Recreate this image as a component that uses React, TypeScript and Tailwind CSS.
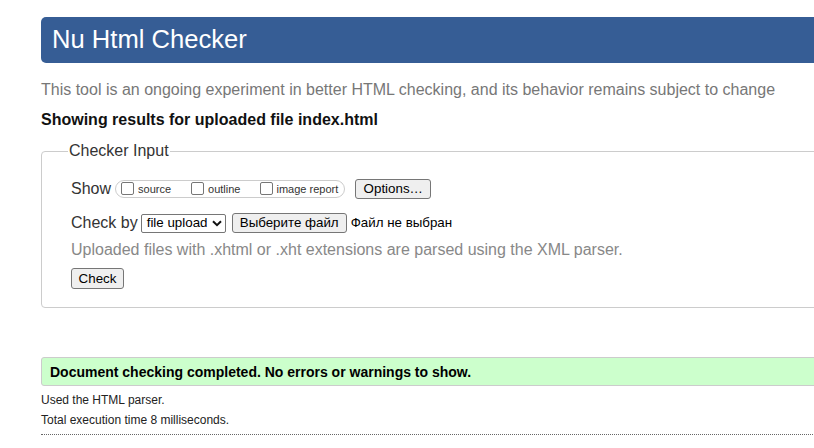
import React from "react";

const font = { fontFamily: '"Liberation Sans", Arial, sans-serif' };

const Box = () => (
	<span className="inline-block w-[13px] h-[13px] border border-[#767676] rounded-[2px] bg-white shrink-0 mt-[1px]" />
);

const App = () => {
	return (
		<div className="w-[814px] h-[448px] overflow-hidden bg-white text-[#222]" style={font}>
			<div className="w-[900px] ml-[41px] pt-[17px]">
				{/* header */}
				<h1 className="h-[46px] bg-[#365d95] rounded-[5px] flex items-center pl-[11px] pb-[2px] text-white text-[25.6px] leading-[30px]">
					Nu Html Checker
				</h1>

				<p className="mt-[18px] text-[16px] leading-[18px] text-[#777]">
					This tool is an ongoing experiment in better HTML checking, and its behavior remains subject to change
				</p>
				<p className="mt-[12px] text-[16px] leading-[18px] font-bold text-[#111]">
					Showing results for uploaded file index.html
				</p>

				{/* checker input */}
				<fieldset className="mt-[13px] border border-[#ccc] rounded-[4px] pl-[26px] pb-[18px]">
					<legend className="pl-[1px] pr-[1px] text-[16px] leading-[18px] text-[#333]">Checker Input</legend>
					<div className="pl-[3px]">
						<div className="mt-[18px] h-[22px] flex items-center">
							<span className="text-[16px] leading-[18px] text-[#333]">Show</span>
							<div className="ml-[4px] h-[18px] border border-[#ccc] rounded-full flex items-start pl-[5px] pr-[6px]">
								<Box />
								<span className="ml-[4px] mt-[2px] text-[11px] leading-[13px] text-[#333]">source</span>
								<span className="ml-[20px] flex items-start">
									<Box />
									<span className="ml-[4px] mt-[2px] text-[11px] leading-[13px] text-[#333]">outline</span>
								</span>
								<span className="ml-[20px] flex items-start">
									<Box />
									<span className="ml-[3px] mt-[2px] text-[11px] leading-[13px] text-[#333]">image report</span>
								</span>
							</div>
							<button className="ml-[10px] h-[20px] w-[76px] bg-[#efefef] border border-[#767676] rounded-[3px] text-[13.33px] leading-[16px] text-black">
								Options…
							</button>
						</div>

						<div className="mt-[12px] h-[22px] flex items-center">
							<span className="text-[16px] leading-[18px] text-[#333]">Check by</span>
							<div className="ml-[3px] h-[19px] w-[85px] border border-[#767676] rounded-[2px] bg-white flex items-center justify-between pl-[5px] pr-[3px] text-[13.33px] leading-[16px] text-black">
								<span>file upload</span>
								<svg width="10" height="7" viewBox="0 0 10 7" className="mt-[1px]">
									<path d="M1 1.2 L5 5.2 L9 1.2" fill="none" stroke="#111" strokeWidth="2" />
								</svg>
							</div>
							<button className="ml-[6px] h-[20px] w-[115px] bg-[#efefef] border border-[#767676] rounded-[3px] text-[13.33px] leading-[16px] text-black">
								Выберите файл
							</button>
							<span className="ml-[4px] text-[13.33px] leading-[16px] text-black">Файл не выбран</span>
						</div>

						<p className="mt-[7px] text-[16px] leading-[18px] text-[#888]">
							Uploaded files with .xhtml or .xht extensions are parsed using the XML parser.
						</p>

						<button className="mt-[9px] h-[21px] w-[53px] bg-[#efefef] border border-[#767676] rounded-[3px] text-[13.33px] leading-[16px] text-black block">
							Check
						</button>
					</div>
				</fieldset>

				{/* results */}
				<div className="mt-[49px] h-[29px] bg-[#ccffcc] border border-[#ccc] rounded-[3px] flex items-center pl-[8px] text-[14px] leading-[16px] font-bold text-black">
					Document checking completed. No errors or warnings to show.
				</div>
				<p className="mt-[7px] text-[12px] leading-[14px] text-[#222]">Used the HTML parser.</p>
				<p className="mt-[6px] text-[12px] leading-[14px] text-[#222]">Total execution time 8 milliseconds.</p>
				<div className="mt-[7px] border-t border-dotted border-[#666]" />
			</div>
		</div>
	);
};

export default App;
